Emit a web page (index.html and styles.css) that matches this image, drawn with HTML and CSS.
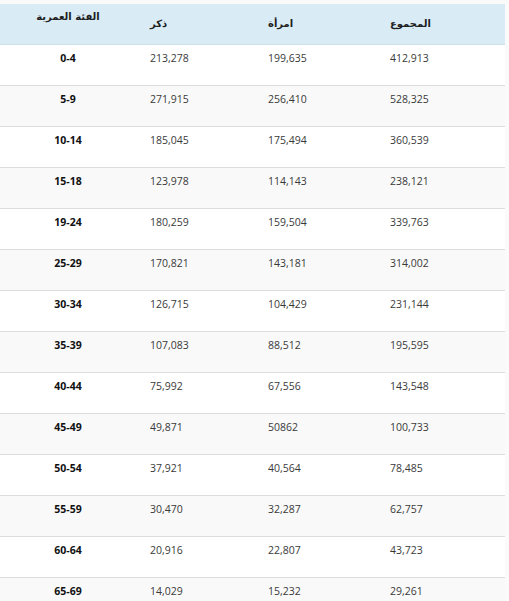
FILE: index.html
```html
<!DOCTYPE html>
<html lang="ar">
<head>
<meta charset="utf-8">
<link rel="stylesheet" href="styles.css">
</head>
<body>
<div class="wrap">
<table class="pop">
  <thead>
    <tr>
      <th class="c-age">الفئة العمرية</th>
      <th class="c-num">ذكر</th>
      <th class="c-num">امرأة</th>
      <th class="c-num">المجموع</th>
    </tr>
  </thead>
  <tbody>
    <tr><td class="age">0-4</td><td>213,278</td><td>199,635</td><td>412,913</td></tr>
    <tr><td class="age">5-9</td><td>271,915</td><td>256,410</td><td>528,325</td></tr>
    <tr><td class="age">10-14</td><td>185,045</td><td>175,494</td><td>360,539</td></tr>
    <tr><td class="age">15-18</td><td>123,978</td><td>114,143</td><td>238,121</td></tr>
    <tr><td class="age">19-24</td><td>180,259</td><td>159,504</td><td>339,763</td></tr>
    <tr><td class="age">25-29</td><td>170,821</td><td>143,181</td><td>314,002</td></tr>
    <tr><td class="age">30-34</td><td>126,715</td><td>104,429</td><td>231,144</td></tr>
    <tr><td class="age">35-39</td><td>107,083</td><td>88,512</td><td>195,595</td></tr>
    <tr><td class="age">40-44</td><td>75,992</td><td>67,556</td><td>143,548</td></tr>
    <tr><td class="age">45-49</td><td>49,871</td><td>50862</td><td>100,733</td></tr>
    <tr><td class="age">50-54</td><td>37,921</td><td>40,564</td><td>78,485</td></tr>
    <tr><td class="age">55-59</td><td>30,470</td><td>32,287</td><td>62,757</td></tr>
    <tr><td class="age">60-64</td><td>20,916</td><td>22,807</td><td>43,723</td></tr>
    <tr><td class="age">65-69</td><td>14,029</td><td>15,232</td><td>29,261</td></tr>
  </tbody>
</table>
</div>
</body>
</html>
```
FILE: styles.css
```css
html, body {
  margin: 0;
  padding: 0;
  background: #fafafa;
}
.wrap {
  padding-top: 4px;
  width: 505px;
}
.pop {
  border-collapse: collapse;
  width: 505px;
  table-layout: fixed;
  background: #ffffff;
  font-family: "Open Sans", "DejaVu Sans", sans-serif;
  font-size: 10.5px;
  color: #3a3a3a;
  direction: ltr;
}
.pop th {
  background: #d9ecf6;
  height: 40px;
  box-sizing: border-box;
  padding: 0 0 0 14px;
  border-bottom: 1px solid #cfdfe8;
  font-family: "DejaVu Sans", sans-serif;
  font-weight: bold;
  font-size: 10px;
  color: #1e1e1e;
  text-align: left;
  vertical-align: middle;
}
.pop th.c-age {
  width: 136px;
  padding-left: 0;
  text-align: center;
  vertical-align: top;
  padding-top: 7px;
}
.pop th:nth-child(2) { width: 118px; }
.pop th:nth-child(3) { width: 122px; }
.pop td {
  height: 41px;
  padding: 5px 0 0 14px;
  box-sizing: border-box;
  border-bottom: 1px solid #dddddd;
  vertical-align: top;
  line-height: 16px;
}
.pop td.age {
  text-align: center;
  padding-left: 0;
  font-weight: bold;
  color: #111111;
}
.pop tbody tr:nth-child(even) td {
  background: #f9f9f9;
}
```
